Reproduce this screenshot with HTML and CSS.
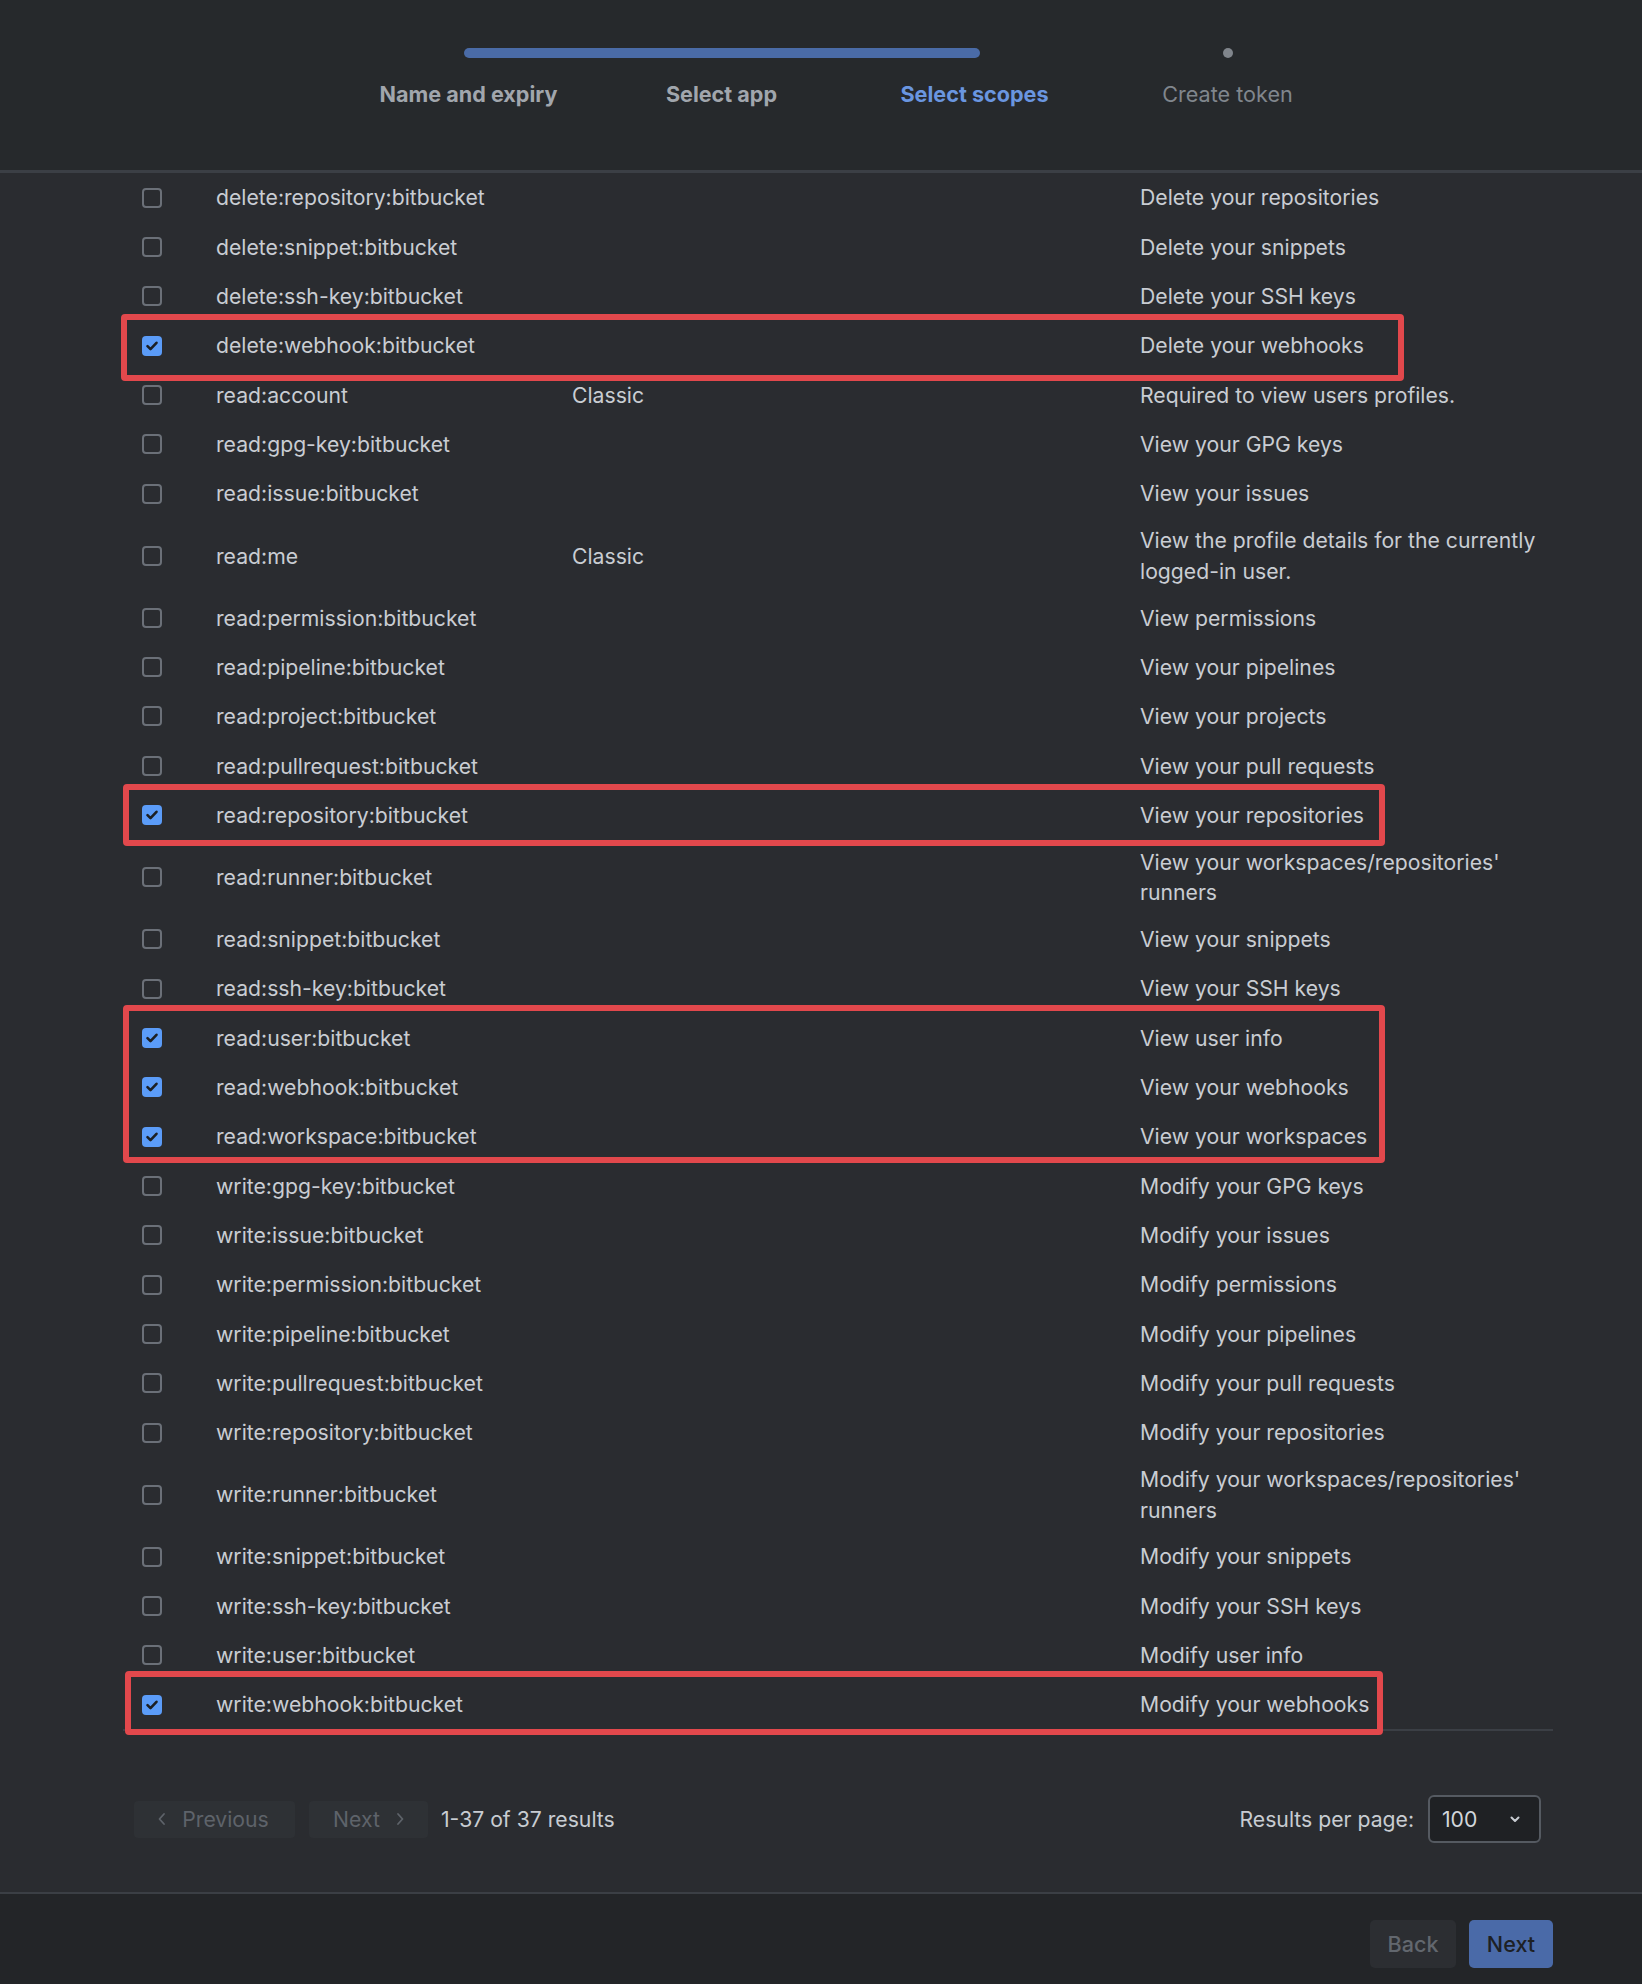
FILE: index.html
```html
<!DOCTYPE html>
<html lang="en">
<head>
<meta charset="utf-8">
<title>Select scopes</title>
<link rel="stylesheet" href="styles.css">
</head>
<body>
<div class="page">
  <header class="stepper">
    <div class="steps">
      <div class="track"><div class="fill"></div><div class="dot"></div></div>
      <div class="labels">
        <span class="label done">Name and expiry</span>
        <span class="label done">Select app</span>
        <span class="label active">Select scopes</span>
        <span class="label todo">Create token</span>
      </div>
    </div>
  </header>

  <main class="content">
    <div class="table">
      <div class="row"><span class="cb"></span><span class="name">delete:repository:bitbucket</span><span class="type"></span><span class="desc">Delete your repositories</span></div>
      <div class="row"><span class="cb"></span><span class="name">delete:snippet:bitbucket</span><span class="type"></span><span class="desc">Delete your snippets</span></div>
      <div class="row"><span class="cb"></span><span class="name">delete:ssh-key:bitbucket</span><span class="type"></span><span class="desc">Delete your SSH keys</span></div>
      <div class="row"><span class="cb on"><svg viewBox="0 0 20 20"><path d="M5.5 10.2l3 3 6-6.4"/></svg></span><span class="name">delete:webhook:bitbucket</span><span class="type"></span><span class="desc">Delete your webhooks</span></div>
      <div class="row"><span class="cb"></span><span class="name">read:account</span><span class="type">Classic</span><span class="desc">Required to view users profiles.</span></div>
      <div class="row"><span class="cb"></span><span class="name">read:gpg-key:bitbucket</span><span class="type"></span><span class="desc">View your GPG keys</span></div>
      <div class="row"><span class="cb"></span><span class="name">read:issue:bitbucket</span><span class="type"></span><span class="desc">View your issues</span></div>
      <div class="row"><span class="cb"></span><span class="name">read:me</span><span class="type">Classic</span><span class="desc">View the profile details for the currently logged-in user.</span></div>
      <div class="row"><span class="cb"></span><span class="name">read:permission:bitbucket</span><span class="type"></span><span class="desc">View permissions</span></div>
      <div class="row"><span class="cb"></span><span class="name">read:pipeline:bitbucket</span><span class="type"></span><span class="desc">View your pipelines</span></div>
      <div class="row"><span class="cb"></span><span class="name">read:project:bitbucket</span><span class="type"></span><span class="desc">View your projects</span></div>
      <div class="row"><span class="cb"></span><span class="name">read:pullrequest:bitbucket</span><span class="type"></span><span class="desc">View your pull requests</span></div>
      <div class="row"><span class="cb on"><svg viewBox="0 0 20 20"><path d="M5.5 10.2l3 3 6-6.4"/></svg></span><span class="name">read:repository:bitbucket</span><span class="type"></span><span class="desc">View your repositories</span></div>
      <div class="row"><span class="cb"></span><span class="name">read:runner:bitbucket</span><span class="type"></span><span class="desc">View your workspaces/repositories' runners</span></div>
      <div class="row"><span class="cb"></span><span class="name">read:snippet:bitbucket</span><span class="type"></span><span class="desc">View your snippets</span></div>
      <div class="row"><span class="cb"></span><span class="name">read:ssh-key:bitbucket</span><span class="type"></span><span class="desc">View your SSH keys</span></div>
      <div class="row"><span class="cb on"><svg viewBox="0 0 20 20"><path d="M5.5 10.2l3 3 6-6.4"/></svg></span><span class="name">read:user:bitbucket</span><span class="type"></span><span class="desc">View user info</span></div>
      <div class="row"><span class="cb on"><svg viewBox="0 0 20 20"><path d="M5.5 10.2l3 3 6-6.4"/></svg></span><span class="name">read:webhook:bitbucket</span><span class="type"></span><span class="desc">View your webhooks</span></div>
      <div class="row"><span class="cb on"><svg viewBox="0 0 20 20"><path d="M5.5 10.2l3 3 6-6.4"/></svg></span><span class="name">read:workspace:bitbucket</span><span class="type"></span><span class="desc">View your workspaces</span></div>
      <div class="row"><span class="cb"></span><span class="name">write:gpg-key:bitbucket</span><span class="type"></span><span class="desc">Modify your GPG keys</span></div>
      <div class="row"><span class="cb"></span><span class="name">write:issue:bitbucket</span><span class="type"></span><span class="desc">Modify your issues</span></div>
      <div class="row"><span class="cb"></span><span class="name">write:permission:bitbucket</span><span class="type"></span><span class="desc">Modify permissions</span></div>
      <div class="row"><span class="cb"></span><span class="name">write:pipeline:bitbucket</span><span class="type"></span><span class="desc">Modify your pipelines</span></div>
      <div class="row"><span class="cb"></span><span class="name">write:pullrequest:bitbucket</span><span class="type"></span><span class="desc">Modify your pull requests</span></div>
      <div class="row"><span class="cb"></span><span class="name">write:repository:bitbucket</span><span class="type"></span><span class="desc">Modify your repositories</span></div>
      <div class="row"><span class="cb"></span><span class="name">write:runner:bitbucket</span><span class="type"></span><span class="desc">Modify your workspaces/repositories' runners</span></div>
      <div class="row"><span class="cb"></span><span class="name">write:snippet:bitbucket</span><span class="type"></span><span class="desc">Modify your snippets</span></div>
      <div class="row"><span class="cb"></span><span class="name">write:ssh-key:bitbucket</span><span class="type"></span><span class="desc">Modify your SSH keys</span></div>
      <div class="row"><span class="cb"></span><span class="name">write:user:bitbucket</span><span class="type"></span><span class="desc">Modify user info</span></div>
      <div class="row"><span class="cb on"><svg viewBox="0 0 20 20"><path d="M5.5 10.2l3 3 6-6.4"/></svg></span><span class="name">write:webhook:bitbucket</span><span class="type"></span><span class="desc">Modify your webhooks</span></div>

      <div class="mark mark-1"></div>
      <div class="mark mark-2"></div>
      <div class="mark mark-3"></div>
      <div class="mark mark-4"></div>
    </div>

    <div class="pager">
      <div class="pager-left">
        <span class="pbtn prev"><svg viewBox="0 0 12 20"><path d="M8 5l-4.5 5L8 15"/></svg>Previous</span>
        <span class="pbtn next">Next<svg viewBox="0 0 12 20"><path d="M4 5l4.5 5L4 15"/></svg></span>
        <span class="count">1-37 of 37 results</span>
      </div>
      <div class="pager-right">
        <span class="rpp">Results per page:</span>
        <span class="select">100<svg viewBox="0 0 16 16"><path d="M4.5 6.5L8 10l3.5-3.5"/></svg></span>
      </div>
    </div>
  </main>

  <footer class="actions">
    <span class="btn back">Back</span>
    <span class="btn primary">Next</span>
  </footer>
</div>
</body>
</html>
```

FILE: styles.css
```css
* { box-sizing: border-box; }

html, body {
  margin: 0;
  padding: 0;
  background: #2a2c30;
}

body {
  font-family: Inter, "Noto Sans", "Liberation Sans", sans-serif;
  color: #c8ccd2;
  font-size: 21.2px;
  width: 1642px;
  height: 1984px;
  overflow: hidden;
}

.page {
  display: flex;
  flex-direction: column;
  height: 1984px;
}

/* ---------- stepper ---------- */
.stepper {
  height: 173px;
  background: #26292c;
  border-bottom: 3px solid #3b3f45;
  padding-top: 48px;
}

.steps {
  width: 1012px;
  margin-left: 342px;
}

.track {
  position: relative;
  height: 10px;
  margin: 0 126.5px;
}

.fill {
  position: absolute;
  left: -5px;
  top: 0;
  height: 10px;
  width: calc(66.667% + 10px);
  border-radius: 5px;
  background: #4a6ba7;
}

.dot {
  position: absolute;
  right: -5px;
  top: 0;
  width: 10px;
  height: 10px;
  border-radius: 50%;
  background: #80858c;
}

.labels {
  display: grid;
  grid-template-columns: repeat(4, 253px);
  margin-top: 21px;
}

.label {
  text-align: center;
  font-size: 21.6px;
  line-height: 30px;
}

.label.done { color: #a1a6ad; font-weight: 700; }
.label.active { color: #6a96e0; font-weight: 700; }
.label.todo { color: #80868d; font-weight: 400; }

/* ---------- table ---------- */
.content {
  flex: 1;
}

.table {
  position: relative;
  width: 1430px;
  margin-left: 123px;
  border-bottom: 2px solid #3b3f45;
}

.row {
  display: grid;
  grid-template-columns: 93px 356px 568px 413px;
  align-items: center;
  min-height: 49.34px;
  padding: 7px 0;
  line-height: 30.4px;
}

.cb {
  display: block;
  width: 20px;
  height: 20px;
  margin-left: 19px;
  border: 2px solid #6b7078;
  border-radius: 4px;
}

.cb.on {
  border: none;
  background: #5b9cf8;
}

.cb svg {
  display: block;
  width: 20px;
  height: 20px;
  fill: none;
  stroke: #1c1f23;
  stroke-width: 2.6;
  stroke-linecap: round;
  stroke-linejoin: round;
}

.name, .type, .desc {
  color: #c9cdd3;
}

.mark {
  position: absolute;
  border: 6px solid #e2484c;
  border-radius: 4px;
  pointer-events: none;
}

.mark-1 { left: -2px; top: 141px; width: 1283px; height: 67px; }
.mark-2 { left: 0; top: 611px; width: 1262px; height: 62px; }
.mark-3 { left: 0; top: 832px; width: 1262px; height: 158px; }
.mark-4 { left: 2px; top: 1498px; width: 1258px; height: 64px; }

/* ---------- pager ---------- */
.pager {
  display: flex;
  justify-content: space-between;
  align-items: center;
  width: 1430px;
  margin: 64px 0 0 123px;
  padding: 0 12px 0 11px;
  height: 48px;
}

.pager-left, .pager-right {
  display: flex;
  align-items: center;
}

.pbtn {
  display: flex;
  align-items: center;
  justify-content: center;
  height: 37px;
  border-radius: 4px;
  background: #2e3135;
  color: #5e636a;
}

.pbtn svg {
  width: 12px;
  height: 20px;
  fill: none;
  stroke: #5e636a;
  stroke-width: 1.8;
  stroke-linecap: round;
  stroke-linejoin: round;
}

.prev { width: 161px; gap: 14px; padding-right: 4px; }
.next { width: 119px; gap: 14px; margin-left: 14px; padding-left: 2px; }

.count {
  margin-left: 13px;
  color: #c8ccd2;
}

.rpp { color: #c8ccd2; margin-right: 14px; }

.select {
  display: flex;
  align-items: center;
  justify-content: space-between;
  width: 113px;
  height: 48px;
  padding: 0 16px 0 12px;
  border: 2px solid #555a61;
  border-radius: 6px;
  background: #1f2124;
  color: #d2d6db;
}

.select svg {
  width: 16px;
  height: 16px;
  fill: none;
  stroke: #c8ccd2;
  stroke-width: 2;
  stroke-linecap: round;
  stroke-linejoin: round;
}

/* ---------- footer ---------- */
.actions {
  display: flex;
  justify-content: flex-end;
  align-items: flex-start;
  gap: 13px;
  height: 92px;
  padding: 26px 89px 0 0;
  border-top: 2px solid #3b3f45;
  background: #232528;
}

.btn {
  display: flex;
  align-items: center;
  justify-content: center;
  height: 48px;
  border-radius: 5px;
  font-size: 21.6px;
  font-weight: 500;
}

.back {
  width: 86px;
  background: #2c2e32;
  color: #62676e;
}

.primary {
  width: 84px;
  background: #4a6aa8;
  color: #1d2024;
}
```
